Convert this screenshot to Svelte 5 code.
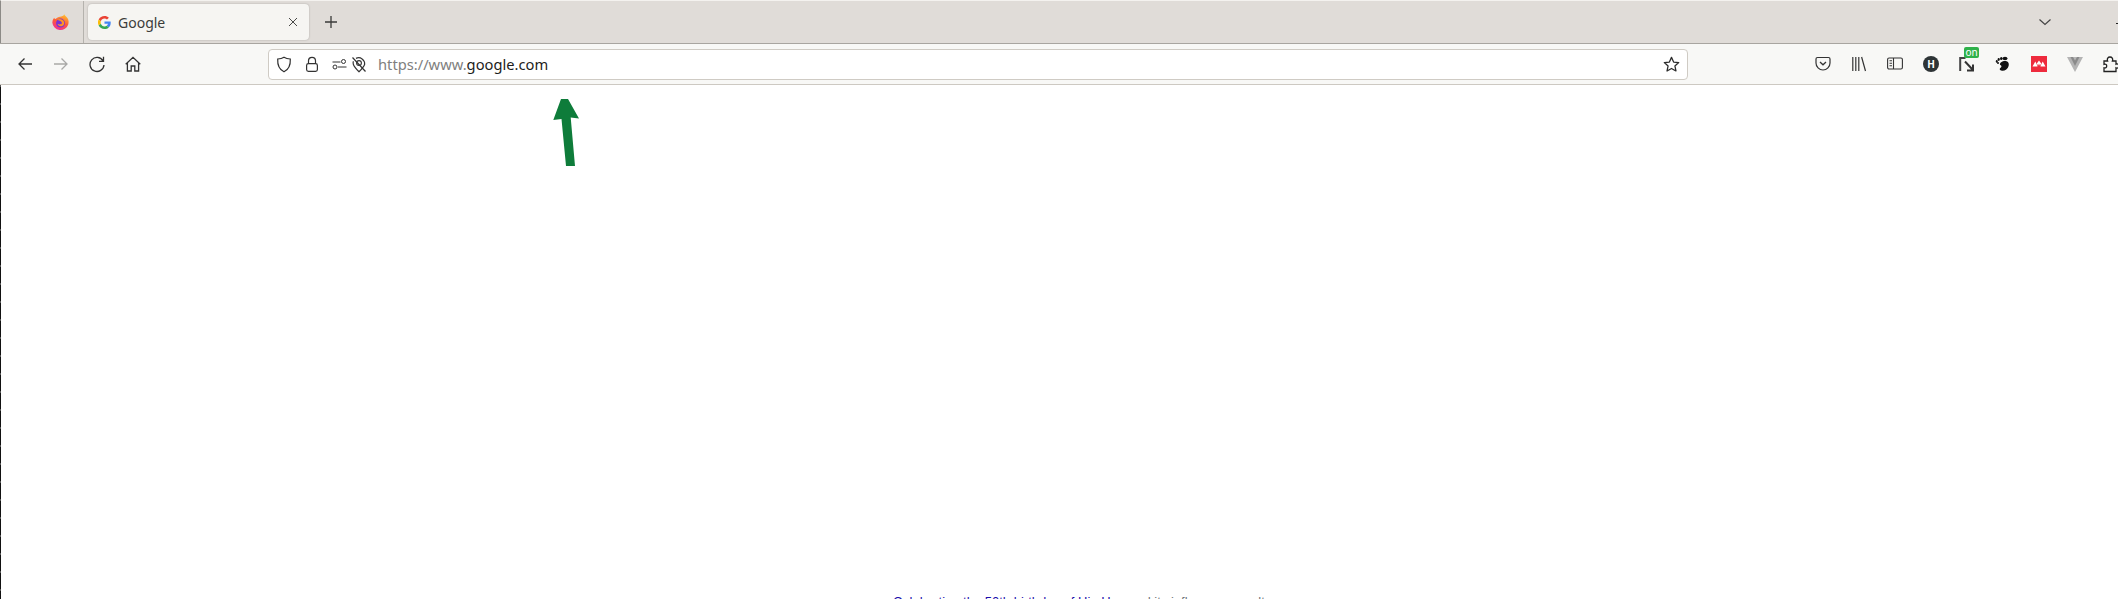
<script>
  const leftIcons = [
    { name: 'back', d: 'M16 9H3M8.500 3.500 3 9l5.500 5.500' },
    { name: 'forward', d: 'M2 9h13M9.500 3.500 15 9l-5.500 5.500', dim: true },
    { name: 'reload', d: 'M15 5.800A7 7 0 1 0 16 10M15.500 1.800V6.300h-4.500' },
    { name: 'home', d: 'M1.700 9.300 9 2.300l7.300 7M3.400 7.800V16H7.200V11h3.600v5h3.800V7.800' }
  ];
</script>

<div class="window">
  <div class="tabbar">
    <div class="firefox-slot">
      <svg width="17" height="17" viewBox="0 0 16 16">
        <defs>
          <linearGradient id="fx" x1="0.7" y1="0" x2="0.3" y2="1">
            <stop offset="0" stop-color="#ffc02e" />
            <stop offset="0.5" stop-color="#ff5a38" />
            <stop offset="1" stop-color="#f02d9a" />
          </linearGradient>
        </defs>
        <path d="M11.500.3c.3 1.500 2 2 3 3.500 1.300 1.800 1.400 4.200.8 6A7.700 7.700 0 0 1 .3 8 7 7 0 0 1 2 3.500c.3.800.7 1.200 1.300 1.300C4.500 3.300 6 2.700 7.500 2.500c1.500-.2 3.500-.4 4-2.200Z" fill="url(#fx)" />
        <circle cx="8" cy="8.500" r="4.200" fill="#7a33d6" />
        <path d="M4.800 5.500c2-1.300 5.500-.8 6.500 1.700.8 2.200-.8 4.300-3 4.300-1.500 0-2.800-1-3-2.300 1 .8 3.500 1 4-.5C9.700 7.500 7.500 6.500 4.800 5.500Z" fill="#ff9424" />
      </svg>
    </div>
    <div class="tab">
      <svg class="favicon" width="13" height="13" viewBox="0 0 48 48">
        <path fill="#ea4335" d="M24 9.500c3.500 0 6.700 1.200 9.200 3.600l6.900-6.900C35.900 2.400 30.500 0 24 0 14.600 0 6.500 5.400 2.600 13.200l8 6.200C12.400 13.700 17.700 9.500 24 9.500Z" />
        <path fill="#4285f4" d="M46.900 24.500c0-1.600-.1-3.100-.4-4.500H24v9h12.900c-.6 3-2.200 5.400-4.700 7.100l7.700 6c4.500-4.200 7-10.300 7-17.600Z" />
        <path fill="#fbbc05" d="M10.500 28.600A14.500 14.500 0 0 1 10.500 19.400l-8-6.200A24 24 0 0 0 2.600 34.800l7.900-6.200Z" />
        <path fill="#34a853" d="M24 48c6.500 0 11.900-2.100 15.900-5.800l-7.700-6c-2.200 1.400-4.900 2.300-8.200 2.300-6.300 0-11.600-4.200-13.500-9.900l-8 6.200C6.500 42.600 14.600 48 24 48Z" />
      </svg>
      <span class="tab-title">Google</span>
      <svg class="tab-close" width="10" height="10" viewBox="0 0 10 10">
        <path d="M1 1l8 8M9 1 1 9" stroke="#4a4a48" stroke-width="1" fill="none" />
      </svg>
    </div>
    <svg class="new-tab" width="14" height="14" viewBox="0 0 14 14">
      <path d="M7 1v12M1 7h12" stroke="#3a3a38" stroke-width="1.300" fill="none" />
    </svg>
    <svg class="tab-list" width="14" height="8" viewBox="0 0 14 8">
      <path d="M1.500 1.500 7 6.500l5.500-5" stroke="#444" stroke-width="1.200" fill="none" />
    </svg>
    <span class="win-min"></span>
  </div>

  <div class="toolbar">
    <div class="nav-buttons">
      {#each leftIcons as icon}
        <span class="btn">
          <svg width="18" height="18" viewBox="0 0 18 18">
            <path d={icon.d} stroke={icon.dim ? '#a9a9a7' : '#333'} stroke-width="1.300" fill="none" />
          </svg>
        </span>
      {/each}
    </div>

    <div class="urlbar">
      <svg class="ico-shield" width="16" height="17" viewBox="0 0 16 17">
        <path d="M8 1.200c2 1.300 4 1.700 6.300 1.800.3 5.800-1.500 10.500-6.300 12.800C3.200 13.500 1.400 8.800 1.700 3 4 2.900 6 2.500 8 1.200Z" stroke="#2f2f2f" stroke-width="1.200" fill="none" />
      </svg>
      <svg class="ico-lock" width="14" height="17" viewBox="0 0 14 17">
        <path d="M3.500 7.500V4.800a3.500 3.500 0 0 1 7 0v2.700" stroke="#333" stroke-width="1.200" fill="none" />
        <rect x="1.600" y="7.600" width="10.800" height="7.800" rx="1.800" stroke="#333" stroke-width="1.200" fill="none" />
      </svg>
      <svg class="ico-perm" width="15" height="12" viewBox="0 0 15 12">
        <path d="M0.500 4H8.500M6 9h8.500" stroke="#333" stroke-width="1" fill="none" />
        <circle cx="11.500" cy="3.500" r="2" stroke="#333" stroke-width="1" fill="none" />
        <circle cx="3" cy="9" r="2" stroke="#333" stroke-width="1" fill="none" />
      </svg>
      <svg class="ico-geo" width="16" height="17" viewBox="0 0 16 17">
        <path d="M5 2.400A6 6 0 0 1 13.600 8.500c-.8 2.300-3.300 5-5.600 7.200C5.700 13.500 3.200 10.800 2.400 8.500 2 7.300 2 6.200 2.400 5.200" stroke="#333" stroke-width="1.200" fill="none" />
        <circle cx="8" cy="7" r="2.400" stroke="#333" stroke-width="1.100" fill="none" />
        <path d="M1.500 1.500 14.500 15.500" stroke="#333" stroke-width="1.200" fill="none" />
      </svg>
      <span class="url"><span class="url-dim">https://www.</span>google.com</span>
      <svg class="ico-star" width="17" height="17" viewBox="0 0 16 16">
        <path d="M8 1.300 10 5.700l4.800.5-3.600 3.200 1 4.700L8 11.700 3.800 14.100l1-4.700L1.200 6.200 6 5.700 8 1.300Z" stroke="#2b2b2b" stroke-width="1.200" stroke-linejoin="round" fill="none" />
      </svg>
    </div>

    <div class="ext-buttons">
      <span class="btn">
        <svg width="16" height="16" viewBox="0 0 16 16">
          <path d="M2.500 1.500h11A1.500 1.500 0 0 1 15 3V7a7 7 0 0 1-14 0V3A1.500 1.500 0 0 1 2.500 1.500Z" stroke="#333" stroke-width="1.200" fill="none" />
          <path d="M5 6 8 8.800l3-2.800" stroke="#333" stroke-width="1.300" fill="none" />
        </svg>
      </span>
      <span class="btn">
        <svg width="16" height="16" viewBox="0 0 16 16">
          <path d="M1.800 1v14M4.800 1v14M7.800 1v14M10.600 1 14.500 15" stroke="#333" stroke-width="1.200" fill="none" />
        </svg>
      </span>
      <span class="btn">
        <svg width="16" height="14" viewBox="0 0 16 14">
          <rect x="0.600" y="1" width="14.800" height="11" rx="1.500" stroke="#333" stroke-width="1.100" fill="none" />
          <path d="M6.500 1v11M2.500 3.800h2.500M2.500 6.300h2.500M2.500 8.800h2.500" stroke="#333" stroke-width="1.100" fill="none" />
        </svg>
      </span>
      <span class="btn"><span class="ext-h">H</span></span>
      <span class="btn">
        <svg width="16" height="16" viewBox="0 0 16 16">
          <path d="M1.200 15V2H6.500" stroke="#444" stroke-width="2" fill="none" />
          <path d="M6 5.500l7.500 8M14 8.500V14.500H8" stroke="#333" stroke-width="2" fill="none" />
        </svg>
        <span class="badge">on</span>
      </span>
      <span class="btn">
        <svg width="16" height="16" viewBox="0 0 16 16">
          <path d="M9 5c3.800-.5 5.500 1.800 4.600 5-.8 3-3.800 5-6.600 4.700-2.300-.2-3-1.800-1.400-2.900 1.400-1 1-2.100-.3-2.700C4 8 6 5.400 9 5Z" fill="#111" />
          <ellipse cx="1.800" cy="5.400" rx="1" ry="1.300" fill="#111" />
          <ellipse cx="3.700" cy="3.500" rx="1.100" ry="1.400" fill="#111" />
          <ellipse cx="6.300" cy="2.500" rx="1.300" ry="1.500" fill="#111" />
          <ellipse cx="10" cy="2.500" rx="2.500" ry="1.700" fill="#111" />
          <circle cx="3" cy="6.900" r="1" fill="#111" />
        </svg>
      </span>
      <span class="btn">
        <svg width="16" height="16" viewBox="0 0 16 16">
          <rect width="16" height="16" fill="#ee2b3d" />
          <path d="M1.500 10.500 4.300 5.500 6.800 10.500ZM9.200 10.500 11.700 5.500 14.500 10.500ZM5.800 7.500 8 4.500l2.200 3L8 11Z" fill="#fff" />
          <path d="M8 7.500 6.500 11h3Z" fill="#ee2b3d" />
        </svg>
      </span>
      <span class="btn">
        <svg width="16" height="15" viewBox="0 0 16 15">
          <path d="M0 0h16L8 15Z" fill="#b4b4b4" />
          <path d="M3.500 0h9L8 9Z" fill="#8a8a8a" />
          <path d="M6 0h4L8 3.500Z" fill="#b8b8b8" />
        </svg>
      </span>
      <span class="btn">
        <svg width="16" height="17" viewBox="0 0 16 17">
          <path d="M1 5h3.600C3.800 2.800 5 1 7 1s3.200 1.800 2.400 4H13v3.200c2-.8 2.800.5 2.800 1.800s-.8 2.600-2.800 1.800V15.500H1V11.800c2 .6 2.700-.6 2.700-1.800S3 7.700 1 8.300Z" stroke="#222" stroke-width="1.300" fill="none" />
        </svg>
      </span>
    </div>
  </div>

  <div class="page">
    <p class="doodle-text">
      <span class="doodle-link">Celebrating the 50th birthday of Hip Hop</span>
      <span class="doodle-rest">and its influence on culture</span>
    </p>
  </div>

  <svg class="annotation" width="30" height="72" viewBox="0 0 30 72">
    <path d="M8 1h7l11 19.500-8.300-1L22 68h-9L8.500 21 .3 22Z" fill="#0e7c3a" />
  </svg>
</div>

<style>
  :global(body) {
    margin: 0;
    overflow: hidden;
    background: #fff;
  }

  .window {
    position: relative;
    display: flex;
    flex-direction: column;
    width: 2118px;
    height: 599px;
    overflow: hidden;
    font-family: "Noto Sans", "Open Sans", sans-serif;
  }

  .tabbar {
    display: flex;
    align-items: center;
    flex: none;
    height: 43px;
    box-sizing: border-box;
    background: #e0dcd8;
    border-top: 1px solid #f4f2ef;
    border-left: 1px solid #8c8a86;
  }

  .tabbar > * {
    flex: none;
  }

  .firefox-slot {
    display: flex;
    align-items: center;
    justify-content: flex-end;
    box-sizing: border-box;
    width: 83px;
    height: 42px;
    padding-right: 14px;
    border-right: 1px solid #b5b2ad;
  }

  .tab {
    display: flex;
    align-items: center;
    box-sizing: border-box;
    width: 221px;
    height: 36px;
    margin-left: 4px;
    padding: 0 11px 0 10px;
    background: #f6f5f2;
    border-radius: 4px;
    box-shadow: 0 0 2px rgba(0, 0, 0, 0.25);
  }

  .tab-title {
    flex: 1;
    margin-left: 7px;
    color: #3c3c3a;
    font-size: 14px;
  }

  .new-tab {
    margin-left: 15px;
  }

  .tab-list {
    margin-left: 1700px;
  }

  .win-min {
    width: 6px;
    height: 1px;
    margin: 3px 0 0 64px;
    background: #222;
  }

  .toolbar {
    display: flex;
    align-items: center;
    flex: none;
    height: 42px;
    box-sizing: border-box;
    padding-left: 7px;
    background: #f8f8f6;
    border-top: 1px solid #a8a5a0;
    border-bottom: 1px solid #cdc9c2;
  }

  .nav-buttons,
  .ext-buttons {
    display: flex;
    flex: none;
  }

  .btn {
    position: relative;
    display: flex;
    align-items: center;
    justify-content: center;
    width: 36px;
    height: 36px;
    flex: none;
  }

  .urlbar {
    display: flex;
    align-items: center;
    flex: none;
    box-sizing: border-box;
    width: 1420px;
    height: 31px;
    margin-left: 117px;
    padding: 0 7px 0 7px;
    background: #fff;
    border: 1px solid #cfcbc4;
    border-radius: 4px;
  }

  .ico-lock {
    margin-left: 13px;
  }

  .ico-perm {
    margin-left: 13px;
  }

  .ico-geo {
    margin-left: 4px;
  }

  .url {
    flex: 1;
    margin-left: 11px;
    color: #1d1d1b;
    font-size: 14.7px;
  }

  .url-dim {
    color: #80807e;
  }

  .ext-buttons {
    margin-left: 117px;
  }

  .ext-h {
    display: flex;
    align-items: center;
    justify-content: center;
    width: 16px;
    height: 16px;
    border-radius: 50%;
    background: #2e3436;
    color: #fff;
    font-size: 10px;
    font-weight: 700;
  }

  .badge {
    position: absolute;
    top: 1px;
    left: 15px;
    width: 15px;
    height: 11px;
    background: #2fb14a;
    border-radius: 2px;
    color: #fff;
    font-size: 10px;
    line-height: 10px;
    text-align: center;
  }

  .page {
    position: relative;
    flex: 1;
    background: #fff repeating-linear-gradient(to bottom, #555 0 2px, #111 2px 18px) no-repeat left top / 1px 100%;
  }

  .doodle-text {
    display: flex;
    justify-content: flex-start;
    gap: 4px;
    margin: 0;
    padding: 507px 0 0 893px;
    color: #70757a;
    font-family: "Liberation Sans", Arial, sans-serif;
    font-size: 13px;
    line-height: 20px;
    white-space: nowrap;
  }

  .doodle-link {
    color: #1a0dab;
  }

  .annotation {
    position: absolute;
    top: 98px;
    left: 553px;
  }
</style>
